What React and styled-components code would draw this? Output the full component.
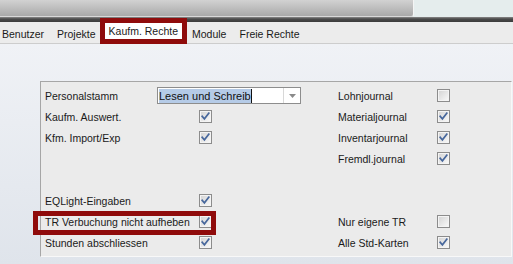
import React from 'react';
import styled, { createGlobalStyle } from 'styled-components';

const GlobalStyle = createGlobalStyle`
  html, body {
    margin: 0;
    padding: 0;
    background: #e3e7ed;
  }
  body {
    font-family: 'Liberation Sans', Arial, sans-serif;
    font-size: 10.5px;
    color: #1a1a1a;
  }
`;

const Screen = styled.div`
  width: 513px;
  height: 264px;
  overflow: hidden;
  display: flex;
  flex-direction: column;
`;

const TopBar = styled.div`
  height: 17px;
  display: flex;
  background: #e5eded;
`;

const TitleBlock = styled.div`
  width: 413px;
  height: 16px;
  background: linear-gradient(to bottom, #d2d2d2, #a9a9a9);
  border-right: 1px solid #f4f4f4;
  border-bottom: 1px solid #d8d8d8;
  border-bottom-right-radius: 3px;
`;

const DarkBand = styled.div`
  height: 5px;
  background: linear-gradient(to bottom, #8a8a8a, #4a4a4a 40%, #3c3c3c);
`;

const TabStrip = styled.nav`
  height: 21px;
  display: flex;
  align-items: center;
  gap: 13px;
  padding-left: 2px;
  background: #ececec;
  border-bottom: 1px solid #cdcdcd;
`;

const Tab = styled.div`
  position: relative;
  white-space: nowrap;
  line-height: 16px;
  padding: ${(p) => (p.$active ? '0 4px' : '0')};
  margin: ${(p) => (p.$active ? '-3px -3px 0 -4px' : '2px 0 0 0')};
  background: ${(p) => (p.$active ? '#ffffff' : 'transparent')};

  ${(p) =>
    p.$active &&
    `
    &::after {
      content: '';
      position: absolute;
      left: -5px;
      right: -5px;
      top: -5px;
      bottom: -5px;
      border: 5px solid #8f0b0b;
    }
  `}
`;

const Content = styled.main`
  flex: 1;
  padding: 37px 1px 0 40px;
  background: linear-gradient(to bottom, #f0f2f6, #dfe4eb);
`;

const Panel = styled.section`
  height: 171px;
  background: #ebebeb;
  border-top: 1px solid #a6a6a6;
  border-left: 1px solid #a6a6a6;
  border-bottom: 1px solid #f8f8f8;
  border-right: 1px solid #f8f8f8;
  padding: 3px 0 0 4px;
  display: grid;
  grid-template-columns: 112px 42px 13px 126px 99px 13px;
  grid-template-rows: repeat(8, 21px);
  align-items: center;
`;

const Label = styled.div`
  grid-row: ${(p) => p.$row};
  grid-column: ${(p) => p.$col} / span ${(p) => p.$span || 1};
  white-space: nowrap;
`;

const Box = styled.div`
  grid-row: ${(p) => p.$row};
  grid-column: ${(p) => p.$col};
  width: 13px;
  height: 13px;
`;

const MarkedRow = styled.div`
  position: relative;
  grid-row: ${(p) => p.$row};
  grid-column: 1 / 4;
  height: 21px;
  display: grid;
  grid-template-columns: 154px 13px;
  grid-template-rows: 21px;
  align-items: center;

  &::after {
    content: '';
    position: absolute;
    left: -12px;
    right: -4px;
    top: 0;
    bottom: -3px;
    border: 5px solid #8f0b0b;
  }
`;

const Combo = styled.div`
  grid-row: 1;
  grid-column: 2 / 5;
  width: 144px;
  height: 17px;
  box-sizing: border-box;
  border: 1px solid #8d8d8d;
  background: #fff;
  display: flex;
  align-items: stretch;
`;

const ComboText = styled.div`
  flex: 1;
  display: flex;
  align-items: center;
  padding-left: 1px;
  font-size: 11px;
`;

const Selected = styled.span`
  background: #b5cbe7;
  color: #111;
  line-height: 14px;
  border-right: 1px solid #111;
`;

const ComboButton = styled.div`
  width: 16px;
  border-left: 1px solid #d8d8d8;
  display: flex;
  align-items: center;
  justify-content: center;
`;

const Check = ({ on, row, col }) => (
  <Box $row={row} $col={col}>
    <svg width="13" height="13" viewBox="0 0 13 13">
      <defs>
        <linearGradient id="cbg" x1="0" y1="0" x2="1" y2="1">
          <stop offset="0" stopColor="#d6d6d6" />
          <stop offset="1" stopColor="#f7f7f7" />
        </linearGradient>
      </defs>
      <rect x="0.5" y="0.5" width="12" height="12" fill="#f4f4f4" stroke="#8c8c8c" />
      <rect x="2" y="2" width="9" height="9" fill="url(#cbg)" />
      {on && (
        <path
          d="M3.2 6.3 L5.4 8.8 L9.8 3.2"
          fill="none"
          stroke="#47679c"
          strokeWidth="1.7"
          strokeLinecap="square"
        />
      )}
    </svg>
  </Box>
);

const App = () => (
  <Screen>
    <GlobalStyle />
    <TopBar>
      <TitleBlock />
    </TopBar>
    <DarkBand />
    <TabStrip>
      <Tab>Benutzer</Tab>
      <Tab>Projekte</Tab>
      <Tab $active>Kaufm. Rechte</Tab>
      <Tab>Module</Tab>
      <Tab>Freie Rechte</Tab>
    </TabStrip>
    <Content>
      <Panel>
        <Label $row={1} $col={1}>Personalstamm</Label>
        <Combo>
          <ComboText>
            <Selected>Lesen und Schreib</Selected>
          </ComboText>
          <ComboButton>
            <svg width="7" height="4" viewBox="0 0 7 4">
              <path d="M0 0 H7 L3.5 4 Z" fill="#8a8a8a" />
            </svg>
          </ComboButton>
        </Combo>
        <Label $row={1} $col={5}>Lohnjournal</Label>
        <Check row={1} col={6} />

        <Label $row={2} $col={1} $span={2}>Kaufm. Auswert.</Label>
        <Check row={2} col={3} on />
        <Label $row={2} $col={5}>Materialjournal</Label>
        <Check row={2} col={6} on />

        <Label $row={3} $col={1} $span={2}>Kfm. Import/Exp</Label>
        <Check row={3} col={3} on />
        <Label $row={3} $col={5}>Inventarjournal</Label>
        <Check row={3} col={6} on />

        <Label $row={4} $col={5}>Fremdl.journal</Label>
        <Check row={4} col={6} on />

        <Label $row={6} $col={1} $span={2}>EQLight-Eingaben</Label>
        <Check row={6} col={3} on />

        <MarkedRow $row={7}>
          <div>TR Verbuchung nicht aufheben</div>
          <Check row={1} col={2} on />
        </MarkedRow>
        <Label $row={7} $col={5}>Nur eigene TR</Label>
        <Check row={7} col={6} />

        <Label $row={8} $col={1} $span={2}>Stunden abschliessen</Label>
        <Check row={8} col={3} on />
        <Label $row={8} $col={5}>Alle Std-Karten</Label>
        <Check row={8} col={6} on />
      </Panel>
    </Content>
  </Screen>
);

export default App;
